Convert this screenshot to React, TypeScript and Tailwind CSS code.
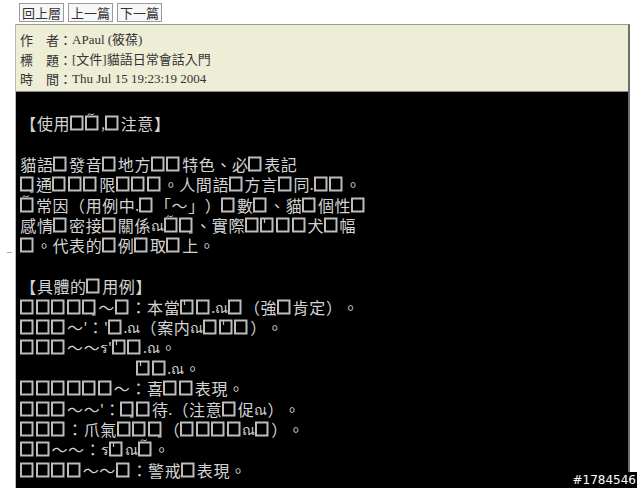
import React from 'react';

const header = [
  { label: '作　者', value: 'APaul (筱葆)' },
  { label: '標　題', value: '[文件]貓語日常會話入門' },
  { label: '時　間', value: 'Thu Jul 15 19:23:19 2004' },
];

// □ = missing glyph box; after a box: ^ tilde above, * tick above, _ tick below
const body = [
  '',
  '【使用□□^,□注意】',
  '',
  '貓語□發音□地方□□特色、必□表記',
  '□_通□□□限□□□。人間語□方言□同.□□。',
  '□^常因（用例中.□「～」）□數□、貓□個性□',
  '感情□密接□關係ณ□^□_、實際□□*□□犬□幅',
  '□。代表的□例□取□上。',
  '',
  '【具體的□用例】',
  '□□□□□_～□：本當□*□.ณ□（強□肯定）。',
  "□□□～'：'□.ณ（案内ณ□□*□）。",
  "□□□～～ร'□*□.ณ。",
  '　　　　　　　□*□.ณ。',
  '□□□□□□～：喜□□表現。',
  "□□□～～'：□_□待.（注意□促ณ）。",
  '□□□：爪氣□□□_（□□□□ณ□）。',
  '□□～～：ร□*ณ□^。',
  '□□□□～～□：警戒□表現。',
  '',
];

type Cell = { ch: string; mark?: string };

function parse(line: string): Cell[] {
  const out: Cell[] = [];
  for (const ch of line) {
    if ((ch === '^' || ch === '*' || ch === '_') && out.length && out[out.length - 1].ch === '□') {
      out[out.length - 1].mark = ch;
    } else {
      out.push({ ch });
    }
  }
  return out;
}

function Box({ mark }: { mark?: string }) {
  return (
    <svg className="shrink-0 block" width="15.6" height="20" viewBox="0 0 15.6 20">
      <rect x="1" y="3.5" width="11.5" height="13" fill="none" stroke="#bdbdbd" strokeWidth="2" />
      {mark === '^' && <path d="M2.5 2 Q4 0 5.5 1.3 T9 0.6" fill="none" stroke="#c8c8c8" strokeWidth="1" />}
      {mark === '*' && <path d="M4.5 3 V8" stroke="#c8c8c8" strokeWidth="1.2" />}
      {mark === '_' && <path d="M10 18 H13.5" stroke="#c8c8c8" strokeWidth="1.2" />}
    </svg>
  );
}

function Line({ text }: { text: string }) {
  return (
    <div className="flex h-[20.4px] items-center whitespace-nowrap leading-[20px]">
      {parse(text).map((c, i) => {
        if (c.ch === '□') return <Box key={i} mark={c.mark} />;
        const wide = c.ch.codePointAt(0)! >= 0x2e80;
        if (wide) {
          return (
            <span key={i} className="inline-flex w-[16.6px] shrink-0 justify-center">
              {c.ch}
            </span>
          );
        }
        return (
          <span key={i} className="shrink-0 text-[14px]">
            {c.ch}
          </span>
        );
      })}
    </div>
  );
}

const buttons = ['回上層', '上一篇', '下一篇'];

export default function App() {
  return (
    <div className="relative h-[488px] overflow-hidden bg-white">
      <div className="flex gap-[4px] pl-[19px] pt-[3px]">
        {buttons.map(b => (
          <button
            key={b}
            className="h-[19px] px-[2px] border border-[#9a9a9a] bg-[#f7f7f7] text-[13px] leading-[17px] text-[#333] font-['Noto_Sans_CJK_TC',sans-serif]"
          >
            {b}
          </button>
        ))}
      </div>
      <div className="ml-[15px] mt-[2px] w-[615px] border-l border-[#b8b8b8] border-r-2 border-r-[#6e6e6e] border-t border-t-[#999]">
        <div className="bg-[#eeedd6] border-b border-[#8a8a8a] pl-[4px] pt-[5px] pb-[2px] text-[13px] leading-[19.5px] text-[#333] font-['Liberation_Serif','Noto_Sans_CJK_TC',serif]">
          {header.map(h => (
            <div key={h.label} className="flex">
              <span className="font-['Noto_Sans_CJK_TC',sans-serif]">{h.label}</span>
              <span className="font-['Noto_Sans_CJK_TC',sans-serif]">：</span>
              <span>{h.value}</span>
            </div>
          ))}
        </div>
        <div className="bg-black h-[420px] pl-[4px] pt-[1px] text-[16px] text-[#d4d4d4] font-['Noto_Sans_CJK_TC','Noto_Sans_CJK_JP',sans-serif]">
          {body.map((l, i) => (
            <Line key={i} text={l} />
          ))}
        </div>
      </div>
      <div className="absolute left-[7px] top-[252px] h-px w-[5px] bg-[#aaa]" />
      <div className="absolute right-[3px] bottom-0 bg-black px-px text-[12px] leading-[16px] text-white font-['DejaVu_Sans',sans-serif]">
        #1784546
      </div>
    </div>
  );
}
